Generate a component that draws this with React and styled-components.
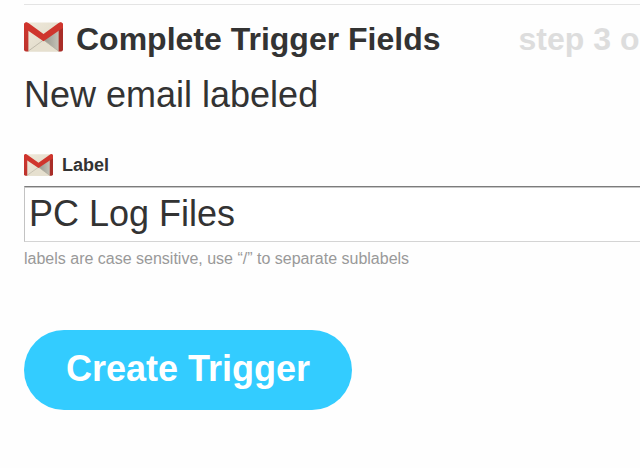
import React, { useId } from 'react';
import styled, { createGlobalStyle } from 'styled-components';

const GlobalStyle = createGlobalStyle`
  body {
    margin: 0;
    background: #fefefe;
    color: #333;
    font-family: 'Liberation Sans', Arial, sans-serif;
  }
`;

const Page = styled.main`
  padding: 4px 0 59px 24px;
  overflow: hidden;
`;

const StepHeader = styled.header`
  display: flex;
  align-items: flex-start;
  gap: 13px;
  padding-top: 17px;
  border-top: 1px solid #e4e4e4;
  white-space: nowrap;
`;

const Title = styled.h1`
  margin: 0;
  font-size: 32px;
  line-height: 35px;
`;

const StepCount = styled.span`
  margin-left: 65px;
  color: #ddd;
  font-size: 32px;
  font-weight: bold;
  line-height: 35px;
`;

const TriggerName = styled.p`
  margin: 16px 0 36px;
  font-size: 36px;
  line-height: 44px;
`;

const FieldLabel = styled.label`
  display: flex;
  align-items: center;
  gap: 9px;
  margin-bottom: 9px;
  font-size: 18px;
  font-weight: bold;
  line-height: 24px;
`;

const TextInput = styled.input`
  display: block;
  box-sizing: border-box;
  width: 100%;
  height: 56px;
  padding: 0 4px;
  border: 1px solid #d4d4d4;
  border-top-color: #7c7c7c;
  border-left-color: #c3c3c3;
  border-right: none;
  border-radius: 0;
  outline: none;
  background: #fff;
  box-shadow: inset 0 1px #c6c6c6;
  color: #333;
  font-family: inherit;
  font-size: 36px;
`;

const Hint = styled.p`
  margin: 7px 0 61px;
  color: #999;
  font-size: 16px;
  line-height: 20px;
`;

const PrimaryButton = styled.button`
  height: 80px;
  padding: 0 42px 2px;
  border: none;
  border-radius: 40px;
  background: #3cf;
  color: #fff;
  font-family: inherit;
  font-size: 36px;
  font-weight: bold;
  cursor: pointer;
`;

const IconSvg = styled.svg`
  flex: none;
  width: ${({ $width }) => $width}px;
  height: ${({ $height }) => $height}px;
`;

function GmailIcon({ width, height }) {
  const id = useId();
  return (
    <IconSvg
      $width={width}
      $height={height}
      viewBox="0 0 40 30"
      preserveAspectRatio="none"
      aria-hidden="true"
    >
      <defs>
        <linearGradient id={`${id}paper`} x1="0" y1="0" x2="1" y2="1">
          <stop offset="0" stopColor="#efe9da" />
          <stop offset="1" stopColor="#ddd7c6" />
        </linearGradient>
        <linearGradient id={`${id}shade`} x1="0" y1="0" x2="1" y2="0">
          <stop offset="0" stopColor="#96958c" />
          <stop offset="1" stopColor="#c4c2b7" />
        </linearGradient>
        <linearGradient id={`${id}side`} x1="0" y1="0" x2="0" y2="1">
          <stop offset="0" stopColor="#cf372f" />
          <stop offset="1" stopColor="#bd332d" />
        </linearGradient>
      </defs>
      <rect x="1" y="0.5" width="38" height="29" rx="2" fill={`url(#${id}paper)`} />
      <path d="M4 29.5 L20 18 L36 29.5 Z" fill="#e6e0cf" />
      <path d="M20 18 L35.5 8 V29.5 Z" fill={`url(#${id}shade)`} />
      <path d="M4.5 29 L20 18 L35.5 29" fill="none" stroke="#b5b0a1" strokeWidth="0.8" />
      <path d="M0 3 Q0 0.5 2.5 0.5 L4.5 3 V29.5 H2 Q0 29.5 0 27.5 Z" fill={`url(#${id}side)`} />
      <path d="M40 3 Q40 0.5 37.5 0.5 L35.5 3 V29.5 H38 Q40 29.5 40 27.5 Z" fill="#a92d28" />
      <path
        d="M0 3 C0 0 2.5 -0.6 4.5 1 L20 12 L35.5 1 C37.5 -0.6 40 0 40 3 V6 L36 8.5 L20 19.2 L4 8.5 L0 6 Z"
        fill="#cf352d"
      />
    </IconSvg>
  );
}

export default function App() {
  return (
    <>
      <GlobalStyle />
      <Page>
        <StepHeader>
          <GmailIcon width={39} height={30} />
          <Title>Complete Trigger Fields</Title>
          <StepCount>step 3 o</StepCount>
        </StepHeader>
        <TriggerName>New email labeled</TriggerName>
        <FieldLabel htmlFor="label">
          <GmailIcon width={29} height={22} />
          Label
        </FieldLabel>
        <TextInput id="label" type="text" defaultValue="PC Log Files" aria-describedby="label-hint" />
        <Hint id="label-hint">labels are case sensitive, use “/” to separate sublabels</Hint>
        <PrimaryButton type="button">Create Trigger</PrimaryButton>
      </Page>
    </>
  );
}
